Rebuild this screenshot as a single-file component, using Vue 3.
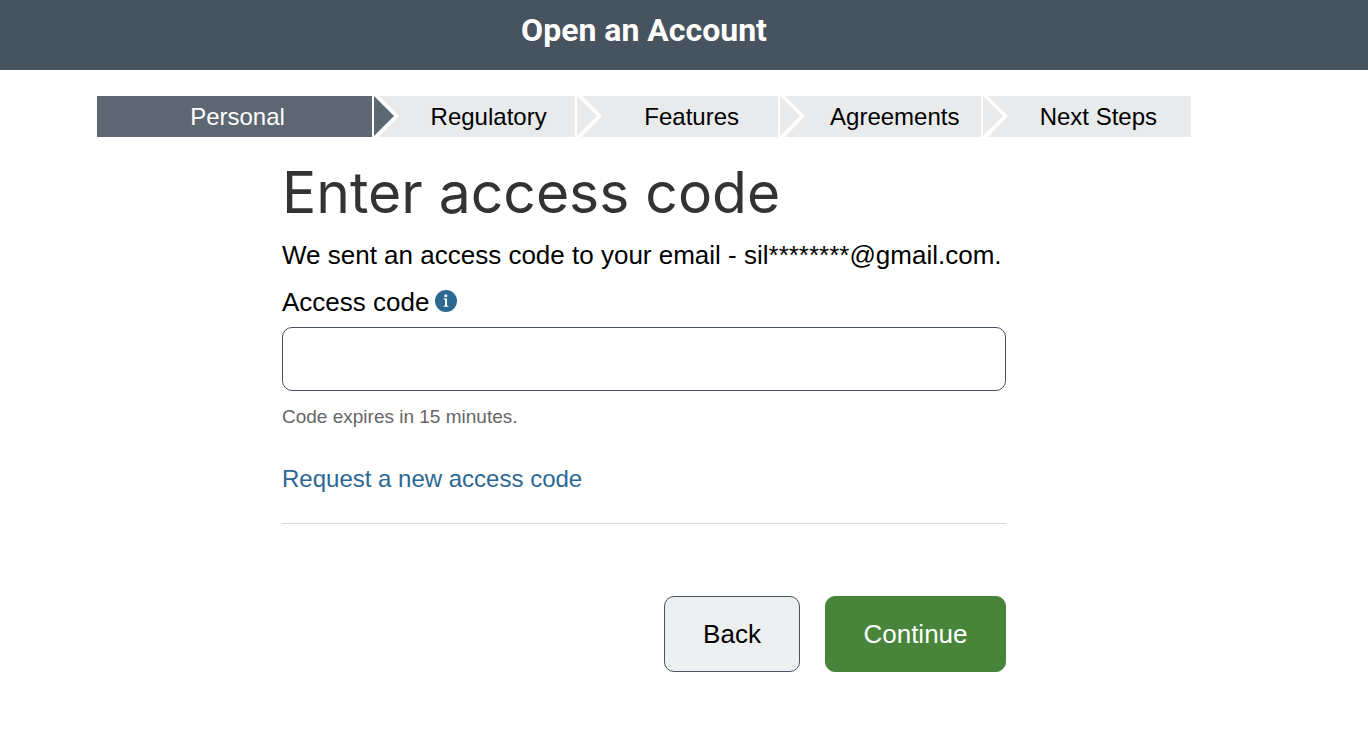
<script setup>
import { ref } from 'vue';

const steps = ['Personal', 'Regulatory', 'Features', 'Agreements', 'Next Steps'];
const activeStep = ref(0);

const email = ref('sil********@gmail.com');
const accessCode = ref('');

const goBack = () => {
  accessCode.value = '';
};

const submitCode = () => {
  accessCode.value = accessCode.value.trim();
};
</script>

<template>
  <div class="page">
    <header class="page-header">
      <p class="page-title">Open an Account</p>
    </header>

    <ol class="steps">
      <li
        v-for="(step, idx) in steps"
        :key="step"
        class="step"
        :class="{ active: idx === activeStep }"
        :aria-current="idx === activeStep ? 'step' : undefined"
      >
        <span class="step-label">{{ step }}</span>
        <svg v-if="idx < steps.length - 1" class="step-arrow" viewBox="0 0 27 41" aria-hidden="true">
          <path class="arrow-gap" d="M0 0H7L27 20L7 41H0z" />
          <path class="arrow-fill" d="M2 0L22 20L2 40z" />
        </svg>
      </li>
    </ol>

    <main class="content">
      <h1 class="heading">Enter access code</h1>
      <p class="message">We sent an access code to your email - {{ email }}.</p>

      <form @submit.prevent="submitCode">
        <div class="label-row">
          <label for="access-code">Access code</label>
          <button type="button" class="info-button" aria-label="About access codes">
            <svg viewBox="0 0 22 22" aria-hidden="true">
              <circle cx="11" cy="11" r="11" fill="#2c6894" />
              <circle cx="10.8" cy="5.8" r="1.5" fill="#fff" />
              <path d="M8.6 8.6H12V15.6L13.4 16V16.8H8.6V16L10 15.6V9.8L8.6 9.4z" fill="#fff" />
            </svg>
          </button>
        </div>
        <input
          id="access-code"
          v-model="accessCode"
          type="text"
          class="code-input"
          autocomplete="one-time-code"
          aria-describedby="code-hint"
        />
        <p id="code-hint" class="hint">Code expires in 15 minutes.</p>
        <a href="#" class="request-link" @click.prevent>Request a new access code</a>

        <!-- Actions -->
        <div class="actions">
          <button type="button" class="btn btn-back" @click="goBack">Back</button>
          <button type="submit" class="btn btn-continue">Continue</button>
        </div>
      </form>
    </main>
  </div>
</template>

<style scoped>
.page {
  color: #000;
  font-family: "Liberation Sans", Arial, sans-serif;
  font-size: 26px;
  line-height: 32px;
}

.page-header {
  padding: 10px 80px 20px 0;
  background: #47535f;
  color: #fff;
  text-align: center;
}

.page-title {
  margin: 0;
  font-family: Roboto, "Liberation Sans", sans-serif;
  font-size: 32px;
  font-weight: 700;
  line-height: 40px;
}

.steps {
  display: grid;
  grid-template-columns: 275fr 201fr 201fr 201fr 208fr;
  gap: 2px;
  width: 80%;
  margin: 26px 0 0 97px;
  padding: 0;
  font-size: 24px;
  list-style: none;
}

.step {
  position: relative;
  display: flex;
  align-items: center;
  justify-content: center;
  height: 41px;
  padding-left: 28px;
  background: #e9eaec;
}

.step.active {
  padding-left: 6px;
  background: #5d6771;
  color: #fff;
}

.step:last-child {
  padding-left: 22px;
}

/* arrow lies over the start of the next step */
.step-arrow {
  position: absolute;
  top: 0;
  left: 100%;
  z-index: 1;
  width: 27px;
  height: 41px;
}

.arrow-gap {
  fill: #fff;
}

.arrow-fill {
  fill: #e9eaec;
}

.step.active .arrow-fill {
  fill: #5d6771;
}

.content {
  width: 53%;
  max-width: 724px;
  margin: 24px auto 0;
  padding-right: 80px;
}

.heading {
  margin: 0;
  color: #333;
  font-family: Inter, "Liberation Sans", sans-serif;
  font-size: 57px;
  font-weight: 400;
  line-height: 64px;
}

.message {
  margin: 14px 0 0;
  white-space: nowrap;
}

.label-row {
  display: flex;
  align-items: center;
  gap: 6px;
  margin-top: 15px;
}

.info-button {
  display: flex;
  width: 22px;
  height: 22px;
  margin-bottom: 2px;
  padding: 0;
  border: none;
  background: none;
  cursor: pointer;
}

.info-button svg {
  width: 100%;
  height: 100%;
}

.code-input {
  display: block;
  box-sizing: border-box;
  width: 100%;
  height: 64px;
  margin-top: 9px;
  padding: 0 16px;
  border: 1px solid #47535f;
  border-radius: 10px;
  background: #fff;
  font: inherit;
}

.hint {
  margin: 14px 0 0;
  color: #666;
  font-size: 19px;
  line-height: 24px;
}

.request-link {
  display: inline-block;
  margin-top: 34px;
  color: #2c6894;
  font-size: 24px;
  text-decoration: none;
}

.request-link:hover {
  text-decoration: underline;
}

.actions {
  display: flex;
  justify-content: flex-end;
  gap: 25px;
  margin-top: 28px;
  padding: 72px 0 60px;
  border-top: 1px solid #d9dbdd;
}

.btn {
  height: 76px;
  padding: 0 36px;
  border: 1px solid #47535f;
  border-radius: 10px;
  font: inherit;
  cursor: pointer;
}

.btn-back {
  min-width: 136px;
  background: #eeeff1;
  color: #000;
}

.btn-continue {
  min-width: 181px;
  border-color: #48853a;
  background: #48853a;
  color: #fff;
}
</style>

<style>
body {
  margin: 0;
  background: #fff;
}
</style>
